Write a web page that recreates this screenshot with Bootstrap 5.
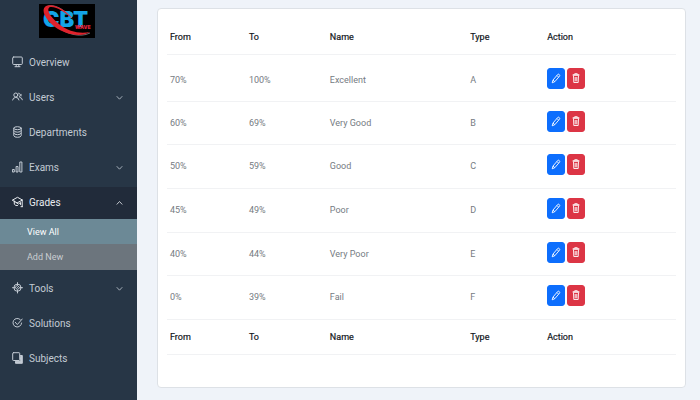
<!DOCTYPE html>
<html lang="en">
<head>
<meta charset="utf-8">
<meta name="viewport" content="width=device-width, initial-scale=1">
<title>CBT Grades</title>
<link href="https://cdn.jsdelivr.net/npm/bootstrap@5.3.0/dist/css/bootstrap.min.css" rel="stylesheet">
<style>
body { font-family: Roboto, "Liberation Sans", sans-serif; background: #eff3f9; }
.sidebar { width: 137px; background: #273646; }
.brand { margin-bottom: 9px; padding-right: 4px; }
.brand svg { display: block; width: 56px; height: 34px; }
.side-link { height: 32px; margin-bottom: 3px; padding: 0 12px; gap: 6px; font-size: 10px; line-height: 16px; color: #c3cbd4; border: 0; background: none; width: 100%; text-align: left; text-decoration: none; }
.side-link svg { width: 11px; height: 12px; flex: none; margin-bottom: 2px; }
.side-link .chev { width: 7px; height: 6px; margin: 0 2px 0 auto; stroke-width: .8; }
.side-link.current { background: #212b3a; color: #e8ecf0; margin-bottom: 0; }
.side-sub { margin-bottom: 3px; background: #6c757d; }
.side-sub a { display: block; padding: 5px 27px; font-size: 9px; line-height: 16px; color: #c9cdd1; text-decoration: none; }
.side-sub a.current { background: #6c8996; color: #fff; padding-bottom: 4px; }
.ico { fill: none; stroke: currentColor; stroke-width: 1; stroke-linecap: round; stroke-linejoin: round; }
.panel { margin: 8px 14px 12px 20px; padding: 11px 9px 32px; border-color: #dde1e6; border-radius: 4px; }
.grades { font-size: 9px; line-height: 16px; table-layout: fixed; --bs-table-bg: transparent; }
.grades > :not(caption) > * > * { padding: 0 3px; border-color: #f1f2f4; vertical-align: middle; }
.grades th { height: 34px; padding-top: 1px; font-weight: 400; color: #14181d; -webkit-text-stroke: .2px #14181d; }
.grades tfoot th { height: 35px; }
.grades td { height: 44px; color: #757b82; }
.grades tbody tr:nth-child(3n+2) td { height: 43px; }
.grades tbody tr:first-child td { height: 47px; padding-top: 4px; }
.grades .btn { width: 18px; height: 21px; padding: 0; border-radius: 3px; line-height: 1; display: flex; align-items: center; justify-content: center; }
.grades .btn svg { width: 10px; height: 11px; }
.acts { gap: 2px; padding-bottom: 3px; }
</style>
<script src="https://cdn.jsdelivr.net/npm/bootstrap@5.3.0/dist/js/bootstrap.bundle.min.js" defer></script>
</head>
<body>
<svg class="d-none" aria-hidden="true">
  <symbol id="down" viewBox="0 0 7 6"><path d="M1 1.5 3.5 4.2 6 1.5"/></symbol>
  <symbol id="up" viewBox="0 0 7 6"><path d="M1 4.2 3.5 1.5 6 4.2"/></symbol>
  <symbol id="pencil" viewBox="0 0 10 11"><path d="M1.2 9.8 2 7 6.8 1.4Q7.5.8 8.3 1.6T8.5 3.2L3.8 8.7ZM6 2.5 7.6 4.1M2 7 3.8 8.7" fill="none" stroke="currentColor" stroke-width=".9" stroke-linejoin="round"/></symbol>
  <symbol id="trash" viewBox="0 0 10 11"><path d="M1.700 2H8.300" fill="none" stroke="currentColor" stroke-width="1.500"/><path d="M3.7 1.500V.7H6.3V1.500M2.5 2.8 2.8 9.5H7.2L7.5 2.8M4.200 4V8.300M5.800 4V8.300" fill="none" stroke="currentColor" stroke-width=".9" stroke-linejoin="round"/></symbol>
</svg>
<div class="d-flex min-vh-100">
  <nav class="sidebar flex-shrink-0 pt-1" aria-label="Main">
    <a class="brand d-flex justify-content-center" href="#" aria-label="CBT">
      <svg viewBox="0 0 56 34">
        <rect width="56" height="34" fill="#000"/>
        <text x="4" y="23" font-family="Inter, sans-serif" font-weight="900" font-size="22" fill="#13a4e8">CBT<tspan x="36" y="25" font-size="5" fill="#e0223a">WAVE</tspan></text>
        <path d="M33 14C25 5 15 0 9 2 2 5 8 15 17 22 27 30 41 34 51 29" fill="none" stroke="#a9acb8" stroke-width=".6"/>
        <path d="M34 15C26 5 14-1 7 2 1 6 7 16 16 23 26 30 41 34 51 28 41 30 30 28 20 20 10 12 7 5 11 3 17 2 26 8 34 15Z" fill="#e0222c"/>
      </svg>
    </a>
    <a class="side-link d-flex align-items-center" href="#"><svg class="ico" viewBox="0 0 11 12"><rect x=".7" y="1" width="9.600" height="7.500" rx="1"/><path d="M4.200 8.500V10.500M6.800 8.500V10.500M3 10.700H8"/></svg>Overview</a>
    <button class="side-link d-flex align-items-center" type="button"><svg class="ico" viewBox="0 0 11 12"><circle cx="3.800" cy="4" r="2"/><path d="M.6 9Q1 6.500 3.800 6.400T7 9M6.600 2.200A1.900 1.900 0 0 1 7.500 5.600M7.800 6.300Q10 6.500 10.400 8.800M9 3.300V5"/></svg>Users<svg class="ico chev"><use href="#down"/></svg></button>
    <a class="side-link d-flex align-items-center" href="#"><svg class="ico" viewBox="0 0 11 12"><ellipse cx="5.500" cy="2.200" rx="3.700" ry="1.500"/><path d="M1.800 2.200V9.800Q2.300 11.300 5.500 11.300T9.200 9.800V2.200M1.800 4.700Q2.300 6.200 5.500 6.200T9.200 4.700M1.800 7.200Q2.300 8.700 5.500 8.700T9.200 7.200"/></svg>Departments</a>
    <button class="side-link d-flex align-items-center" type="button"><svg class="ico" viewBox="0 0 11 12"><path d="M.8 8.500H2.300V11H.8ZM4.500 5.500H6V11H4.500ZM8.200 1H9.900V11H8.200Z"/></svg>Exams<svg class="ico chev"><use href="#down"/></svg></button>
    <button class="side-link current d-flex align-items-center" type="button" aria-expanded="true"><svg class="ico" viewBox="0 0 11 12"><path d="M.6 4 5.500 1.300 10.400 4 5.500 6.700ZM2.300 5V8.200Q3.500 10 5.500 9.600M4 6.500 6.500 8 8.500 6.500V8.500M10.200 4V10.500M9 10.700H10.400"/></svg>Grades<svg class="ico chev"><use href="#up"/></svg></button>
    <div class="side-sub">
      <a class="current" href="#" aria-current="page">View All</a>
      <a href="#">Add New</a>
    </div>
    <button class="side-link d-flex align-items-center" type="button"><svg class="ico" viewBox="0 0 11 12"><circle cx="5.500" cy="5.700" r="3.600"/><path d="M5.500 3.600 7.600 5.700 5.500 7.800 3.400 5.700Z"/><path d="M5.500.6V3M5.500 8.500V11M.5 5.700H3M8 5.700H10.500M5.500 5.700H5.600"/></svg>Tools<svg class="ico chev"><use href="#down"/></svg></button>
    <a class="side-link d-flex align-items-center" href="#"><svg class="ico" viewBox="0 0 11 12"><path d="M8.300 2.600A4.300 4.300 0 1 0 9.600 6M3.300 5.300 5.300 7.600 10.200 2"/></svg>Solutions</a>
    <a class="side-link d-flex align-items-center" href="#"><svg class="ico" viewBox="0 0 11 12"><path d="M8.500 3.500H10.300V11.300H3.500V9.300H8.500Z" fill="currentColor"/><rect x=".7" y=".7" width="7" height="7.800" rx=".7"/></svg>Subjects</a>
  </nav>
  <main class="flex-grow-1 d-flex flex-column">
    <section class="panel card flex-grow-1">
      <table class="table grades mb-0">
        <colgroup><col style="width:15.5%"><col style="width:15.9%"><col style="width:27.6%"><col style="width:15.1%"><col></colgroup>
        <thead><tr><th scope="col">From</th><th scope="col">To</th><th scope="col">Name</th><th scope="col">Type</th><th scope="col">Action</th></tr></thead>
        <tbody>
          <tr><td>70%</td><td>100%</td><td>Excellent</td><td>A</td><td><div class="acts d-flex"><button class="btn btn-primary" aria-label="Edit"><svg><use href="#pencil"/></svg></button><button class="btn btn-danger" aria-label="Delete"><svg><use href="#trash"/></svg></button></div></td></tr>
          <tr><td>60%</td><td>69%</td><td>Very Good</td><td>B</td><td><div class="acts d-flex"><button class="btn btn-primary" aria-label="Edit"><svg><use href="#pencil"/></svg></button><button class="btn btn-danger" aria-label="Delete"><svg><use href="#trash"/></svg></button></div></td></tr>
          <tr><td>50%</td><td>59%</td><td>Good</td><td>C</td><td><div class="acts d-flex"><button class="btn btn-primary" aria-label="Edit"><svg><use href="#pencil"/></svg></button><button class="btn btn-danger" aria-label="Delete"><svg><use href="#trash"/></svg></button></div></td></tr>
          <tr><td>45%</td><td>49%</td><td>Poor</td><td>D</td><td><div class="acts d-flex"><button class="btn btn-primary" aria-label="Edit"><svg><use href="#pencil"/></svg></button><button class="btn btn-danger" aria-label="Delete"><svg><use href="#trash"/></svg></button></div></td></tr>
          <tr><td>40%</td><td>44%</td><td>Very Poor</td><td>E</td><td><div class="acts d-flex"><button class="btn btn-primary" aria-label="Edit"><svg><use href="#pencil"/></svg></button><button class="btn btn-danger" aria-label="Delete"><svg><use href="#trash"/></svg></button></div></td></tr>
          <tr><td>0%</td><td>39%</td><td>Fail</td><td>F</td><td><div class="acts d-flex"><button class="btn btn-primary" aria-label="Edit"><svg><use href="#pencil"/></svg></button><button class="btn btn-danger" aria-label="Delete"><svg><use href="#trash"/></svg></button></div></td></tr>
        </tbody>
        <tfoot><tr><th scope="col">From</th><th scope="col">To</th><th scope="col">Name</th><th scope="col">Type</th><th scope="col">Action</th></tr></tfoot>
      </table>
    </section>
  </main>
</div>
</body>
</html>
